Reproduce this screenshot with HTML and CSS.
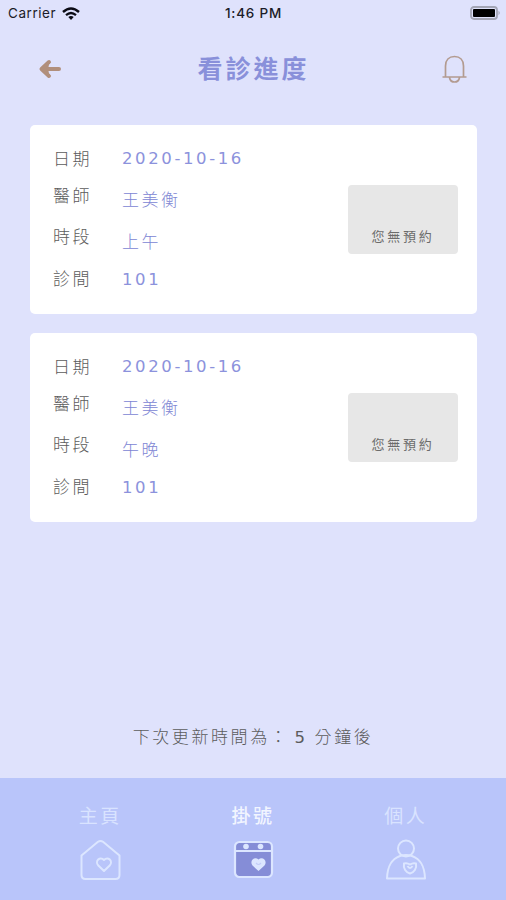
FILE: index.html
```html
<!DOCTYPE html>
<html lang="zh-Hant">
<head>
    <meta charset="UTF-8">
    <meta name="viewport" content="width=device-width, initial-scale=1.0">
    <title>看診進度</title>
    <link rel="stylesheet" href="styles.css">
</head>
<body>

    <div class="status-bar">
        <div class="carrier">
            <span>Carrier</span>
            <svg width="18" height="13" viewBox="0 0 18 13">
                <path d="M1 5 Q9 -2 17 5" fill="none" stroke="#0b0b14" stroke-width="2.4"/>
                <path d="M4 8.2 Q9 3.8 14 8.2" fill="none" stroke="#0b0b14" stroke-width="2.2"/>
                <path d="M6.3 10 Q9 7.9 11.7 10 L9 13 Z" fill="#0b0b14"/>
            </svg>
        </div>
        <div class="clock">1:46 PM</div>
        <svg class="battery" width="31" height="14" viewBox="0 0 31 14">
            <rect x="1" y="1" width="26" height="12" rx="3" fill="#dfe2fb" stroke="#a3a5b5" stroke-width="1.8"/>
            <rect x="3" y="3" width="22" height="8" rx="1" fill="#000"/>
            <path d="M28.5 4.8 Q31 7 28.5 9.2 Z" fill="#a3a5b5"/>
        </svg>
    </div>

    <header class="header">
        <svg width="24" height="20" viewBox="0 0 24 20">
            <path d="M11 3 L3.5 10 L11 17 Z" fill="#b18f7c"/>
            <path d="M11 3 L3.5 10 L11 17 M5 10 H21" fill="none" stroke="#b18f7c" stroke-width="4" stroke-linecap="round" stroke-linejoin="round"/>
            <path d="M13 4 V7.5 H10 Z M13 16 V12.5 H10 Z" fill="#dfe2fc"/>
        </svg>
        <h1>看診進度</h1>
        <svg width="26" height="30" viewBox="0 0 26 30">
            <path d="M3.5 23 V12 C3.5 6 7 2.5 12.5 2.5 S21.5 6 21.5 12 V23 M.5 23 H24.5 M7.5 23.5 C8.5 29.5 16.5 29.5 17.5 23.5" fill="none" stroke="#b39b90" stroke-width="1.7"/>
        </svg>
    </header>

    <main class="cards">
        <section class="card">
            <div class="labels">
                <span>日期</span>
                <span>醫師</span>
                <span>時段</span>
                <span>診間</span>
            </div>
            <div class="values">
                <span class="number">2020-10-16</span>
                <span>王美衡</span>
                <span>上午</span>
                <span class="number">101</span>
            </div>
            <div class="booking">您無預約</div>
        </section>
        <section class="card">
            <div class="labels">
                <span>日期</span>
                <span>醫師</span>
                <span>時段</span>
                <span>診間</span>
            </div>
            <div class="values">
                <span class="number">2020-10-16</span>
                <span>王美衡</span>
                <span>午晚</span>
                <span class="number">101</span>
            </div>
            <div class="booking">您無預約</div>
        </section>
    </main>

    <p class="update">下次更新時間為：<span class="minutes">5</span>分鐘後</p>

    <nav class="tabs">
        <div class="tab">
            <span>主頁</span>
            <svg width="42" height="42" viewBox="0 0 42 42" fill="none" stroke="#dce6ff" stroke-width="2" stroke-linejoin="round">
                <path d="M2.5 16.5 L19 2.8 Q21.5 1 24 2.8 L40.5 16.5 V36 Q40.5 40 36.5 40 H6.5 Q2.5 40 2.5 36 Z"/>
                <path d="M25 32 L19.3 26.5 C15.5 22.5 21 16.5 25 21 C29 16.5 34.5 22.5 30.7 26.5 Z"/>
            </svg>
        </div>
        <div class="tab active">
            <span>掛號</span>
            <svg width="42" height="42" viewBox="0 0 42 42">
                <rect x="3" y="3" width="37" height="35" rx="4.5" fill="#858dd7" stroke="#dce6ff" stroke-width="2.2"/>
                <path d="M3 12 H40" stroke="#dce6ff" stroke-width="2.2"/>
                <circle cx="14" cy="7.5" r="2.8" fill="#dce6ff"/>
                <circle cx="28.5" cy="7.5" r="2.8" fill="#dce6ff"/>
                <path d="M26.5 32 L20.5 26.5 C17 22 22.5 17 26.5 20.5 C30.5 17 36 22 32.5 26.5 Z" fill="#dce6ff"/>
                <path d="M24 24 Q26.5 27 29 24" fill="none" stroke="#c3cdf8" stroke-width="1.2"/>
            </svg>
        </div>
        <div class="tab">
            <span>個人</span>
            <svg width="42" height="42" viewBox="0 0 42 42" fill="none" stroke="#dce6ff" stroke-width="2" stroke-linejoin="round">
                <circle cx="21" cy="9.5" r="8"/>
                <path d="M15 17 C7 20 2.5 26 2 39.5 H40 C39.5 26 35 20 27 17 Q21 15 15 17"/>
                <path d="M19 24.5 Q22 23.5 25 25.5 Q28 23.5 31 24.5 C32 29.5 29 33.5 25 34.5 C21 33.5 18 29.5 19 24.5 Z M22.5 27 Q25 31 27.5 27"/>
            </svg>
        </div>
    </nav>

</body>
</html>
```
FILE: styles.css
```css
body {
    margin: 0;
    height: 900px;
    display: flex;
    flex-direction: column;
    overflow: hidden;
    background-color: #dfe2fc;
    color: #5c5c5c;
    font-family: "Noto Sans CJK TC", sans-serif;
}
svg {
    display: block;
    flex: none;
}
.status-bar {
    height: 26px;
    padding: 0 5px 0 8px;
    display: grid;
    grid-template-columns: 1fr auto 1fr;
    align-items: center;
    font: 13.5px/26px Inter, sans-serif;
    color: #1c1c28;
}
.carrier {
    display: flex;
    align-items: center;
    gap: 6px;
    letter-spacing: 0.55px;
}
.clock {
    padding-right: 2px;
    font-size: 13.5px;
    font-weight: 500;
    letter-spacing: 0.8px;
}
.battery {
    justify-self: end;
}
.header {
    height: 84px;
    padding: 0 38px;
    display: flex;
    align-items: center;
    justify-content: space-between;
}
.header svg {
    margin-top: 2px;
}
h1 {
    margin: -3px 0 0;
    padding-left: 3px;
    font-size: 25px;
    line-height: 36px;
    font-weight: 700;
    letter-spacing: 3px;
    color: #8990da;
}
.cards {
    padding: 15px 29px 0 30px;
    display: flex;
    flex-direction: column;
    gap: 19px;
}
.card {
    box-sizing: border-box;
    height: 189px;
    padding: 14px 19px 14px 23px;
    display: flex;
    background-color: #fff;
    border-radius: 5px;
}
.labels,
.values {
    display: grid;
    grid-template-rows: 37px 41px 42px 38px;
    font-size: 17px;
    font-weight: 300;
    line-height: 38px;
    letter-spacing: 2.5px;
}
.labels {
    width: 69px;
}
.values {
    grid-template-rows: 41px 42px 38px 38px;
    color: #8086d4;
}
.number {
    font-family: "DejaVu Sans", sans-serif;
    font-size: 16.5px;
    font-weight: 400;
    line-height: 39px;
    letter-spacing: 2.6px;
    color: #8c92dc;
}
.booking {
    box-sizing: border-box;
    width: 110px;
    height: 69px;
    margin: 46px 0 0 auto;
    padding: 41px 0 0;
    font-size: 13px;
    line-height: 20px;
    letter-spacing: 2.8px;
    text-align: center;
    color: #6c6c6c;
    background-color: #e7e7e7;
    border-radius: 4px;
}
.update {
    margin: auto 0 28px;
    font-size: 17px;
    font-weight: 300;
    line-height: 24px;
    letter-spacing: 2.6px;
    text-align: center;
}
.minutes {
    margin: 0 7px 0 5px;
    font-family: "DejaVu Sans", sans-serif;
    font-size: 16.5px;
    font-weight: 400;
}
.tabs {
    box-sizing: border-box;
    height: 122px;
    padding: 23px 24px 0;
    display: grid;
    grid-template-columns: repeat(3, 1fr);
    background-color: #b9c5fa;
}
.tab {
    display: flex;
    flex-direction: column;
    align-items: center;
    gap: 10px;
    font-size: 19px;
    line-height: 28px;
    letter-spacing: 2.5px;
    color: #d9e3ff;
}
.active {
    font-weight: 500;
    color: #f2f5ff;
}
```
